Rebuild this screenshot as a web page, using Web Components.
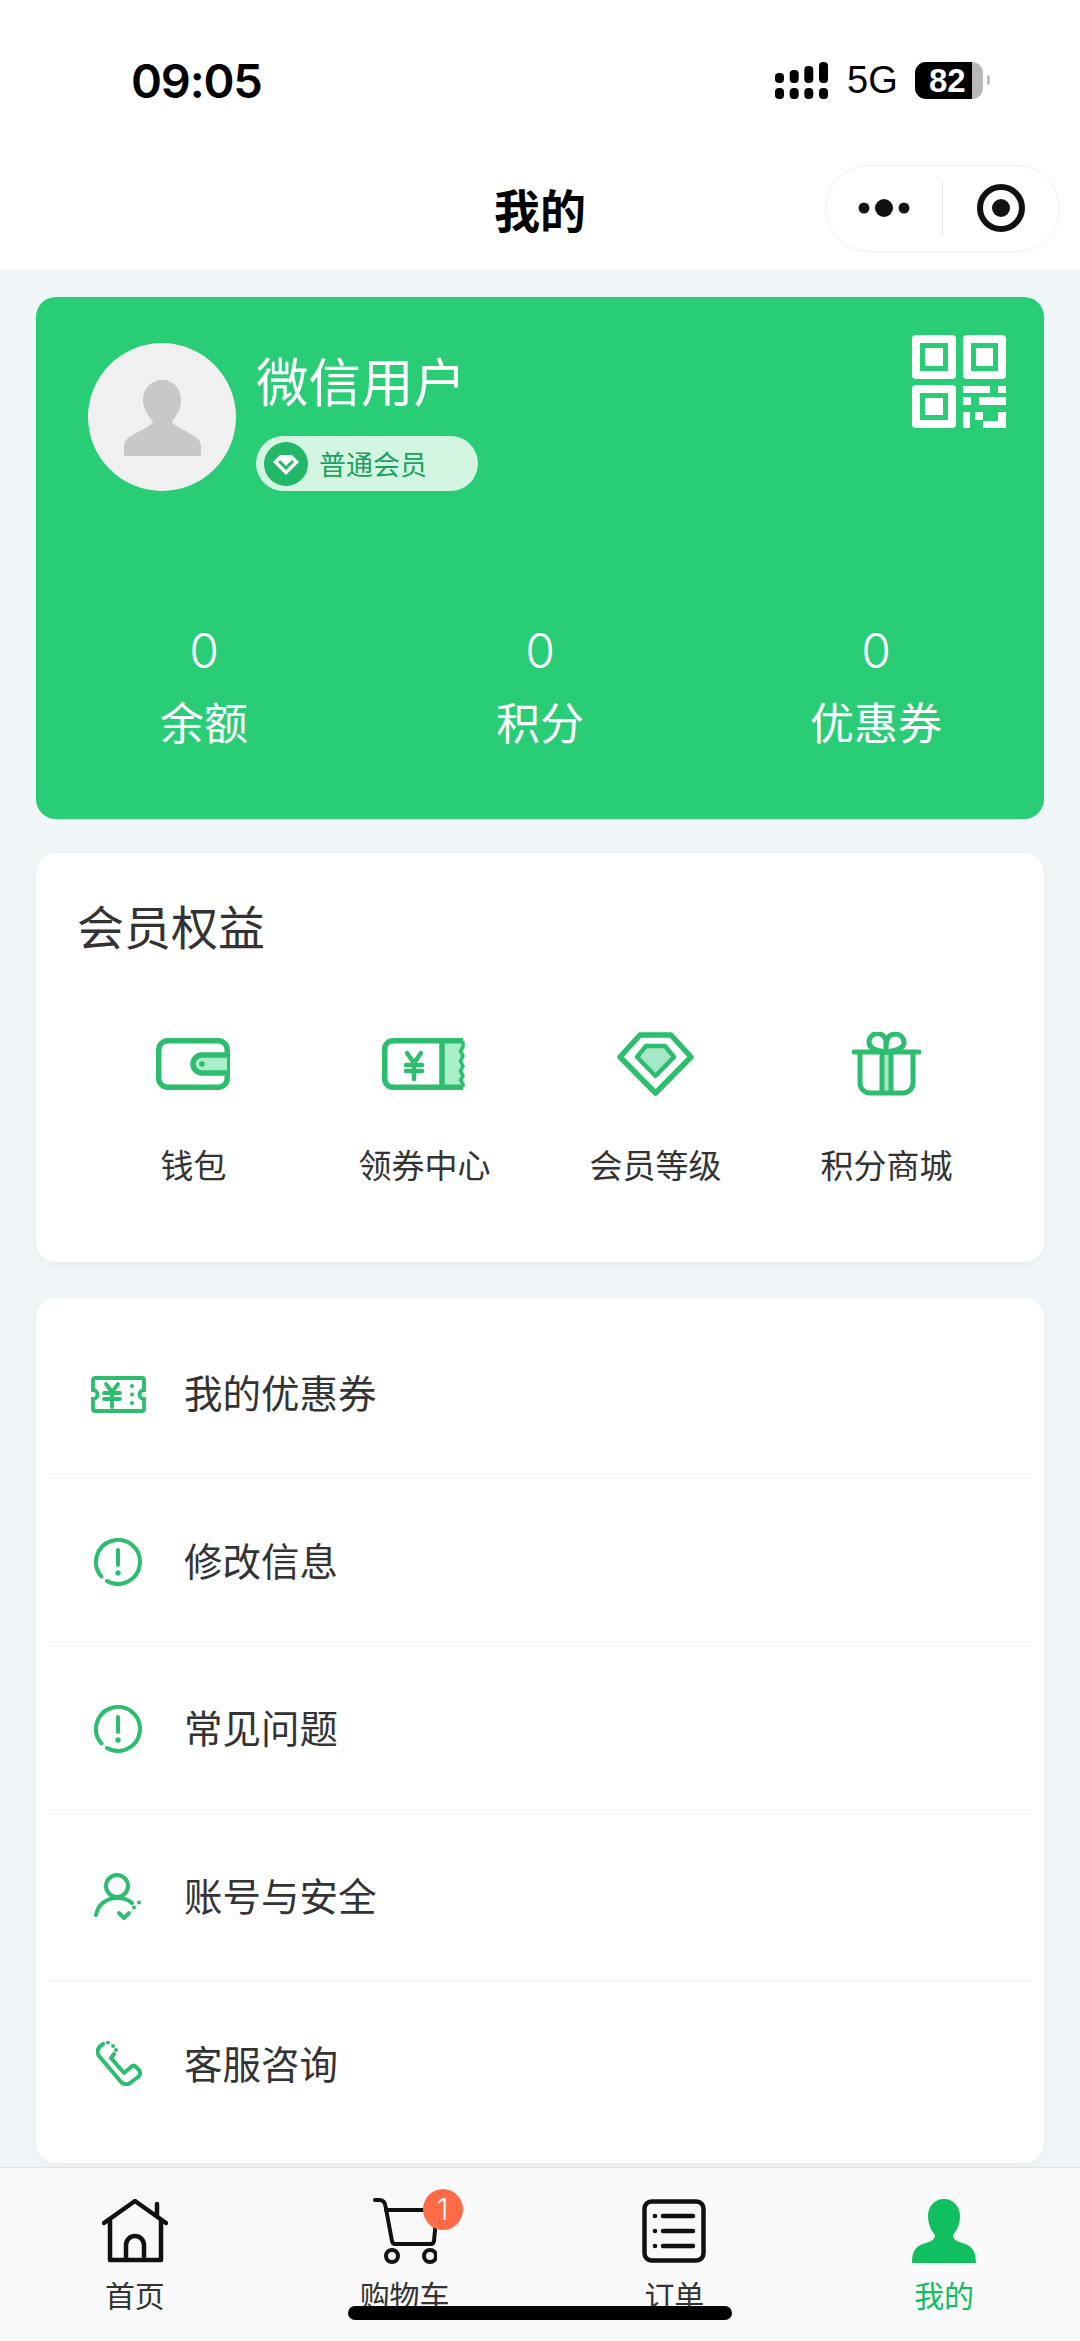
<!DOCTYPE html>
<html lang="zh">
<head>
<meta charset="utf-8">
<title>我的</title>
<style>
  html, body { margin: 0; padding: 0; }
  body {
    width: 1080px;
    height: 2341px;
    overflow: hidden;
    display: flex;
    flex-direction: column;
    background: #f1f6f9;
    font-family: "Noto Sans CJK SC", "Liberation Sans", sans-serif;
    color: #333;
  }
  main {
    flex: 1;
    min-height: 0;
    display: flex;
    flex-direction: column;
    padding: 28px 36px 0;
  }
</style>
</head>
<body>
<status-bar></status-bar>
<nav-bar>我的</nav-bar>
<main>
  <user-card name="微信用户" level="普通会员">
    <stat-item value="0">余额</stat-item>
    <stat-item value="0">积分</stat-item>
    <stat-item value="0">优惠券</stat-item>
  </user-card>

  <perk-card heading="会员权益">
    <perk-item>
      <svg slot="icon" width="74" height="52" viewBox="0 0 74 52" fill="none" stroke="#2dbd6e" stroke-width="5.500" style="margin-left:-2px">
        <rect x="2.750" y="2.750" width="68.500" height="46.500" rx="9"/>
        <path d="M71 17H46a9 9 0 0 0 0 18H71" fill="#a8efc8"/>
        <circle cx="46" cy="26" r="2.800" fill="#2dbd6e" stroke="none"/>
      </svg>
      钱包
    </perk-item>
    <perk-item>
      <svg slot="icon" width="85" height="52" viewBox="0 0 85 52" fill="none" stroke="#2dbd6e" stroke-width="5.500">
        <path d="M60 3H80V8L78 12L81 17L78 22L81 27L78 32L81 37L78 41L81 45V49H60Z" fill="#a8efc8" stroke="none"/>
        <path d="M81 2.750H11a8.250 8.250 0 0 0-8.250 8.250V41a8.250 8.250 0 0 0 8.250 8.250H81"/>
        <path d="M60 3V49" />
        <path d="M81 3V9L78.500 13L81 18L78.500 23L81 28L78.500 33L81 38L78.500 42L81 46V49" stroke-width="3.500"/>
        <path d="M25 15L32 25L39 15M24 27H40M24 33H40M32 25V41" stroke-width="4.500" stroke-linecap="round"/>
      </svg>
      领券中心
    </perk-item>
    <perk-item>
      <svg slot="icon" width="77" height="64" viewBox="0 0 77 64" fill="none" stroke="#2dbd6e" stroke-width="5.500" stroke-linejoin="round">
        <path d="M23 3H54L74 25L38.500 61L3 25Z"/>
        <path d="M29 14H48L57 25L38.500 44L20 25Z" fill="#a5e8c8" stroke-width="4.500"/>
      </svg>
      会员等级
    </perk-item>
    <perk-item>
      <svg slot="icon" width="69" height="64" viewBox="0 0 69 64" fill="none" stroke="#2dbd6e" stroke-width="5">
        <rect x="31" y="20" width="8" height="41" fill="#a8e6c6" stroke="none"/>
        <path d="M8 20V51a10 10 0 0 0 10 10H51a10 10 0 0 0 10-10V20"/>
        <path d="M2 20H67" stroke-linecap="round"/>
        <path d="M30 20V61M39 20V61"/>
        <path d="M34 20C30 19 17 19 17 10a8.500 8.500 0 0 1 17 0V20C34 10 34 2 44 2a8.500 8.500 0 0 1 8 9C52 18 39 19 34 20Z"/>
      </svg>
      积分商城
    </perk-item>
  </perk-card>

  <menu-card>
    <menu-row>
      <svg slot="icon" width="55" height="37" viewBox="0 0 55 37" fill="none" stroke="#2dbd6e" stroke-width="3.800" stroke-linecap="round">
        <path d="M4 2H51a2 2 0 0 1 2 2V14a4.500 4.500 0 0 0 0 9V33a2 2 0 0 1-2 2H4a2 2 0 0 1-2-2V23a4.500 4.500 0 0 0 0-9V4a2 2 0 0 1 2-2Z"/>
        <path d="M15 8L21 16L27 8M13 17H29M13 23H29M21 16V31"/>
        <path d="M41 10V10.100M41 18.500V18.600M41 27V27.100" stroke-width="4"/>
      </svg>
      我的优惠券
    </menu-row>
    <menu-row>
      <svg slot="icon" width="48" height="48" viewBox="0 0 48 48" fill="none" stroke="#2dbd6e" stroke-width="4" stroke-linecap="round">
        <path d="M13 43A22 22 0 1 0 7.500 38.500"/>
        <path d="M24 12V27"/>
        <circle cx="24" cy="35" r="2.700" fill="#2dbd6e" stroke="none"/>
      </svg>
      修改信息
    </menu-row>
    <menu-row>
      <svg slot="icon" width="48" height="48" viewBox="0 0 48 48" fill="none" stroke="#2dbd6e" stroke-width="4" stroke-linecap="round">
        <path d="M13 43A22 22 0 1 0 7.500 38.500"/>
        <path d="M24 12V27"/>
        <circle cx="24" cy="35" r="2.700" fill="#2dbd6e" stroke="none"/>
      </svg>
      常见问题
    </menu-row>
    <menu-row>
      <svg slot="icon" width="48" height="48" viewBox="0 0 48 48" fill="none" stroke="#2dbd6e" stroke-width="4" stroke-linecap="round" stroke-linejoin="round">
        <circle cx="23" cy="13" r="11"/>
        <path d="M2 42C4 31 13 25 23 25C30 25 35 27 38 30"/>
        <path d="M25 40L30 45L35 40"/>
        <path d="M40 34.500V34.600M45 29.500V29.600" stroke-width="4"/>
      </svg>
      账号与安全
    </menu-row>
    <menu-row>
      <svg slot="icon" width="46" height="45" viewBox="0 0 46 45" fill="none" stroke="#2dbd6e" stroke-width="4" stroke-linecap="round" stroke-linejoin="round" style="margin:-3px 0 0 2px">
        <path d="M7 3C2 6 0 10 3 15L25 41C28 44 31 44 34 42L42 36C45 33 45 31 42 28L39 25C37 24 36 25 34 27L28 32L15 17L18 13"/>
        <path d="M12 1.500V1.600M17 5V5.100M20 9V9.100" stroke-width="4"/>
      </svg>
      客服咨询
    </menu-row>
  </menu-card>
</main>
<tab-bar>
  <tab-item>
    <svg slot="icon" width="66" height="64" viewBox="0 0 66 64" fill="none" stroke="#111" stroke-width="4.500" stroke-linecap="round" stroke-linejoin="round">
      <path d="M2 24L33 2L64 24"/>
      <path d="M55 5V17"/>
      <path d="M8 21V61H59V21"/>
      <path d="M24 60V46a9 9 0 0 1 18 0V60"/>
    </svg>
    首页
  </tab-item>
  <tab-item badge="1">
    <svg slot="icon" width="64" height="66" viewBox="0 0 64 66" fill="none" stroke="#111" stroke-width="4" stroke-linecap="round" stroke-linejoin="round">
      <path d="M2 2H6C10 2 12 4 12.500 8L19 43C19.500 45 20 46 22 46H58C60 46 60.500 45 61 43L63 22"/>
      <path d="M13 12H60"/>
      <circle cx="19" cy="58" r="6"/>
      <circle cx="57" cy="58" r="6"/>
    </svg>
    购物车
  </tab-item>
  <tab-item>
    <svg slot="icon" width="64" height="64" viewBox="0 0 64 64" fill="none" stroke="#111" stroke-width="4.500" stroke-linecap="round">
      <rect x="2.500" y="2.500" width="59" height="59" rx="7"/>
      <path d="M21 17H51M21 32H51M21 47H51"/>
      <circle cx="13" cy="17" r="2.300" fill="#111" stroke="none"/>
      <circle cx="13" cy="32" r="2.300" fill="#111" stroke="none"/>
      <circle cx="13" cy="47" r="2.300" fill="#111" stroke="none"/>
    </svg>
    订单
  </tab-item>
  <tab-item active>
    <svg slot="icon" width="64" height="64" viewBox="0 0 64 64" fill="#0fbf60">
      <path d="M32 0C42 0 48 8 48 17C48 25 45 31 41 36C41 40 44 42 50 44C58 46 64 50 64 64H0C0 50 6 46 14 44C20 42 23 40 23 36C19 31 16 25 16 17C16 8 22 0 32 0Z"/>
    </svg>
    我的
  </tab-item>
</tab-bar>

<script>
class StatusBar extends HTMLElement {
    connectedCallback() {
        this.attachShadow({mode: "open"}).innerHTML = `
        <style>
        :host {
            display: flex;
            align-items: center;
            box-sizing: border-box;
            height: 132px;
            padding: 28px 90px 0 131px;
            background: #fff;
            color: #000;
        }
        .time {
            font: 600 47px/1 Inter, "Liberation Sans", sans-serif;
            letter-spacing: -1.200px;
            flex: 1;
        }
        .net {
            font: 400 38px/1 "Liberation Sans", sans-serif;
            margin: 0 18px 0 19px;
            width: 50px;
        }
        .battery {
            box-sizing: border-box;
            width: 68px;
            height: 37px;
            border-radius: 11px;
            background: linear-gradient(90deg, #000 84%, #b8b8b8 84%);
            color: #fff;
            font: 700 33px/37px "Liberation Sans", sans-serif;
            padding-left: 14px;
        }
        .nub {
            width: 3px;
            height: 10px;
            margin-left: 4px;
            border-radius: 0 3px 3px 0;
            background: #bcbcbc;
        }
        </style>
        <span class="time">09:05</span>
        <svg width="53" height="37" viewBox="0 0 53 37" fill="#000">
            <rect x="0" y="11" width="9" height="10" rx="4"/>
            <rect x="14.700" y="8" width="9" height="13" rx="4"/>
            <rect x="29.300" y="4" width="9" height="17" rx="4"/>
            <rect x="44" y="0" width="9" height="21" rx="4"/>
            <rect x="0" y="26" width="9" height="11" rx="4"/>
            <rect x="14.700" y="26" width="9" height="11" rx="4"/>
            <rect x="29.300" y="26" width="9" height="11" rx="4"/>
            <rect x="44" y="26" width="9" height="11" rx="4"/>
        </svg>
        <span class="net">5G</span>
        <span class="battery">82</span>
        <span class="nub"></span>
        `;
    }
}

class NavBar extends HTMLElement {
    connectedCallback() {
        this.attachShadow({mode: "open"}).innerHTML = `
        <style>
        :host {
            display: grid;
            grid-template-columns: 1fr auto 1fr;
            align-items: center;
            height: 137px;
            box-sizing: border-box;
            background: #fff;
            color: #000;
        }
        .title {
            grid-column: 2;
            font-size: 46px;
            font-weight: 700;
            margin-top: 14px;
        }
        .capsule {
            grid-column: 3;
            justify-self: end;
            margin-right: 20px;
            margin-top: 15px;
            box-sizing: border-box;
            display: flex;
            align-items: center;
            width: 235px;
            height: 87px;
            border: 1px solid #f0f0f0;
            border-radius: 44px;
        }
        .half {
            flex: 1;
            display: flex;
            justify-content: center;
            align-items: center;
        }
        .line {
            width: 1px;
            height: 53px;
            background: #e6e6e6;
        }
        </style>
        <span class="title"><slot></slot></span>
        <div class="capsule">
            <div class="half">
                <svg width="52" height="20" viewBox="0 0 52 20" fill="#111">
                    <circle cx="6" cy="10" r="5.500"/>
                    <circle cx="26" cy="10" r="9"/>
                    <circle cx="46" cy="10" r="5.500"/>
                </svg>
            </div>
            <div class="line"></div>
            <div class="half">
                <svg width="48" height="48" viewBox="0 0 48 48">
                    <circle cx="24" cy="24" r="21" fill="none" stroke="#111" stroke-width="6"/>
                    <circle cx="24" cy="24" r="9" fill="#111"/>
                </svg>
            </div>
        </div>
        `;
    }
}

class UserCard extends HTMLElement {
    connectedCallback() {
        this.attachShadow({mode: "open"}).innerHTML = `
        <style>
        :host {
            display: block;
            flex: none;
            height: 522px;
            border-radius: 20px;
            background: #28cd76;
            color: #fff;
            overflow: hidden;
        }
        .top {
            display: flex;
            padding: 46px 38px 0 52px;
        }
        .avatar {
            flex: none;
            width: 148px;
            height: 148px;
            border-radius: 50%;
            background: #f0f0f0;
            display: flex;
            align-items: center;
            justify-content: center;
        }
        .info {
            flex: 1;
            margin-left: 20px;
            display: flex;
            flex-direction: column;
            justify-content: space-between;
            align-items: flex-start;
        }
        .name {
            font-size: 52.500px;
            line-height: 64px;
            margin-top: 4px;
        }
        .level {
            display: flex;
            align-items: center;
            box-sizing: border-box;
            width: 222px;
            height: 55px;
            padding-left: 8px;
            border-radius: 28px;
            background: #d3f6e3;
            color: #1ba160;
            font-size: 27px;
        }
        .level svg { margin-right: 11px; }
        .qr { margin-top: -8px; }
        .stats {
            display: grid;
            grid-template-columns: repeat(3, 1fr);
            margin-top: 130px;
        }
        </style>
        <div class="top">
            <div class="avatar">
                <svg width="77" height="77" viewBox="0 0 77 77" fill="#c8c8c8" style="margin-bottom:-2px">
                    <path d="M38.500 0C49 0 57 8 57 20C57 30 52 36 48 42C50 46 60 50 70 56C74 58 77 62 77 66V76H0V66C0 62 3 58 7 56C17 50 27 46 29 42C25 36 19 30 19 20C19 8 28 0 38.500 0Z"/>
                </svg>
            </div>
            <div class="info">
                <div class="name">${this.getAttribute("name")}</div>
                <div class="level">
                    <svg width="44" height="44" viewBox="0 0 44 44">
                        <circle cx="22" cy="22" r="22" fill="#22b868"/>
                        <path d="M16 13H28L35 20L22 33L9 20Z" fill="#fff"/>
                        <path d="M15 19L22 26L29 19" fill="none" stroke="#22b868" stroke-width="3"/>
                    </svg>
                    ${this.getAttribute("level")}
                </div>
            </div>
            <svg class="qr" width="94" height="93" viewBox="0 0 94 93" fill="#fff" fill-rule="evenodd">
                <path d="M4 0H40a4 4 0 0 1 4 4V40a4 4 0 0 1-4 4H4a4 4 0 0 1-4-4V4a4 4 0 0 1 4-4ZM8 8V36H36V8ZM13 13H31V31H13Z"/>
                <path d="M55 0H90a4 4 0 0 1 4 4V40a4 4 0 0 1-4 4H55a4 4 0 0 1-4-4V4a4 4 0 0 1 4-4ZM59 8V36H86V8ZM64 13H81V31H64Z"/>
                <path d="M4 50H40a4 4 0 0 1 4 4V89a4 4 0 0 1-4 4H4a4 4 0 0 1-4-4V54a4 4 0 0 1 4-4ZM8 58V85H36V58ZM13 63H31V80H13Z"/>
                <rect x="51" y="51" width="27" height="7"/>
                <rect x="86" y="51" width="8" height="7"/>
                <rect x="51" y="62" width="8" height="8"/>
                <rect x="67" y="62" width="27" height="8"/>
                <rect x="51" y="77" width="7" height="16"/>
                <rect x="63" y="77" width="8" height="8"/>
                <rect x="71" y="86" width="23" height="7"/>
                <rect x="86" y="77" width="8" height="16"/>
            </svg>
        </div>
        <div class="stats"><slot></slot></div>
        `;
    }
}

class StatItem extends HTMLElement {
    connectedCallback() {
        this.attachShadow({mode: "open"}).innerHTML = `
        <style>
        :host {
            display: flex;
            flex-direction: column;
            align-items: center;
            gap: 10px;
            font-size: 44px;
            line-height: 60px;
        }
        .num { font-family: Inter, "Liberation Sans", sans-serif; font-size: 48px; font-weight: 300; }
        </style>
        <span class="num">${this.getAttribute("value")}</span>
        <span><slot></slot></span>
        `;
    }
}

class PerkCard extends HTMLElement {
    connectedCallback() {
        this.attachShadow({mode: "open"}).innerHTML = `
        <style>
        :host {
            display: block;
            flex: none;
            box-sizing: border-box;
            height: 409px;
            margin-top: 34px;
            padding: 40px 42px 0;
            border-radius: 20px;
            background: #fff;
            box-shadow: 0 2px 10px rgba(0, 0, 0, .06);
        }
        h2 {
            margin: 0 0 0 -1px;
            font-size: 47px;
            font-weight: 400;
            line-height: 64px;
            color: #333;
        }
        .grid {
            display: grid;
            grid-template-columns: repeat(4, 1fr);
            margin-top: 75px;
        }
        </style>
        <h2>${this.getAttribute("heading")}</h2>
        <div class="grid"><slot></slot></div>
        `;
    }
}

class PerkItem extends HTMLElement {
    connectedCallback() {
        this.attachShadow({mode: "open"}).innerHTML = `
        <style>
        :host {
            display: flex;
            flex-direction: column;
            align-items: center;
            font-size: 33px;
            line-height: 46px;
            color: #333;
        }
        .icon {
            height: 64px;
            margin-bottom: 45px;
            display: flex;
            align-items: center;
        }
        </style>
        <div class="icon"><slot name="icon"></slot></div>
        <span><slot></slot></span>
        `;
    }
}

class MenuCard extends HTMLElement {
    connectedCallback() {
        this.attachShadow({mode: "open"}).innerHTML = `
        <style>
        :host {
            display: block;
            flex: none;
            box-sizing: border-box;
            height: 865px;
            margin-top: 36px;
            padding: 13px 12px 0;
            border-radius: 20px;
            background: #fff;
            box-shadow: 0 2px 10px rgba(0, 0, 0, .06);
        }
        </style>
        <slot></slot>
        `;
    }
}

class MenuRow extends HTMLElement {
    connectedCallback() {
        this.attachShadow({mode: "open"}).innerHTML = `
        <style>
        :host {
            display: flex;
            align-items: center;
            box-sizing: border-box;
            height: 167.500px;
            padding-left: 37px;
            border-bottom: 1px solid #f5f5f5;
            font-size: 38.500px;
            color: #333;
        }
        :host(:last-child) { border-bottom: 0; }
        .icon {
            width: 66px;
            margin-right: 33px;
            display: flex;
            justify-content: center;
        }
        .text { padding-bottom: 6px; }
        </style>
        <div class="icon"><slot name="icon"></slot></div>
        <span class="text"><slot></slot></span>
        `;
    }
}

class TabBar extends HTMLElement {
    connectedCallback() {
        this.attachShadow({mode: "open"}).innerHTML = `
        <style>
        :host {
            position: relative;
            display: grid;
            grid-template-columns: repeat(4, 1fr);
            flex: none;
            box-sizing: border-box;
            height: 174px;
            padding: 30px 1px 0 0;
            border-top: 1px solid #e2e2e2;
            background: #f9f9f9;
        }
        .home {
            position: absolute;
            left: 348px;
            top: 138px;
            width: 384px;
            height: 14px;
            border-radius: 7px;
            background: #000;
        }
        </style>
        <slot></slot>
        <div class="home"></div>
        `;
    }
}

class TabItem extends HTMLElement {
    connectedCallback() {
        const badge = this.getAttribute("badge");
        this.attachShadow({mode: "open"}).innerHTML = `
        <style>
        :host {
            display: flex;
            flex-direction: column;
            align-items: center;
            font-size: 30px;
            line-height: 40px;
            color: #333;
        }
        :host([active]) { color: #0fbf60; }
        .icon {
            position: relative;
            height: 66px;
            margin-bottom: 10px;
            display: flex;
            align-items: center;
        }
        .badge {
            position: absolute;
            left: 50px;
            top: -9px;
            width: 40px;
            height: 41px;
            border-radius: 50%;
            background: #ff6b47;
            color: #fff;
            font: 300 30px/41px Inter, "Liberation Sans", sans-serif;
            text-align: center;
        }
        </style>
        <div class="icon">
            <slot name="icon"></slot>
            ${badge ? `<span class="badge">${badge}</span>` : ""}
        </div>
        <span><slot></slot></span>
        `;
    }
}

customElements.define("status-bar", StatusBar);
customElements.define("nav-bar", NavBar);
customElements.define("user-card", UserCard);
customElements.define("stat-item", StatItem);
customElements.define("perk-card", PerkCard);
customElements.define("perk-item", PerkItem);
customElements.define("menu-card", MenuCard);
customElements.define("menu-row", MenuRow);
customElements.define("tab-bar", TabBar);
customElements.define("tab-item", TabItem);
</script>
</body>
</html>
